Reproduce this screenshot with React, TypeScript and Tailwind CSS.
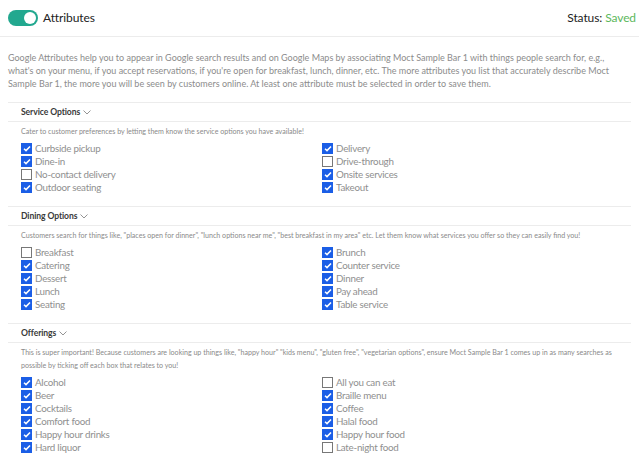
import React from "react";

type Item = { label: string; checked: boolean };

const Check = ({ checked }: { checked: boolean }) =>
  checked ? (
    <span className="w-[11px] h-[11px] bg-[#1b5ee6] flex items-center justify-center shrink-0">
      <svg width="8" height="7" viewBox="0 0 8 7">
        <path d="M1 3.8 L3 5.6 L7 1.4" stroke="white" strokeWidth="1.5" fill="none" />
      </svg>
    </span>
  ) : (
    <span className="w-[11px] h-[11px] border border-[#777] bg-white shrink-0" />
  );

const Row = ({ item }: { item: Item }) => (
  <div className="flex items-center h-[13px] gap-[3px]">
    <Check checked={item.checked} />
    <span className="text-[9.8px] tracking-[-0.25px] leading-[13px] text-[#8f8f8f] whitespace-nowrap">{item.label}</span>
  </div>
);

const Chevron = () => (
  <svg width="8" height="5" viewBox="0 0 8 5" className="ml-[3px] mt-[1px]">
    <path d="M0.5 0.5 L4 4 L7.5 0.5" stroke="#888" strokeWidth="0.9" fill="none" />
  </svg>
);

const Section = ({
  title,
  desc,
  left,
  right,
}: {
  title: string;
  desc: React.ReactNode;
  left: Item[];
  right: Item[];
}) => (
  <div className="mx-2 border-t border-[#ececec]">
    <div className="flex items-center pl-[13px] border-b border-[#ececec] h-[19px]">
      <span className="text-[8.6px] tracking-[-0.1px] font-bold text-[#3a3a3a]">{title}</span>
      <Chevron />
    </div>
    <div className="pl-[13px] pt-[3px] text-[7.1px] leading-[13px] text-[#8a8a8a] whitespace-nowrap">{desc}</div>
    <div className="pl-[13px] pt-[4px] pb-[12px] grid grid-cols-[301px_1fr]">
      <div className="flex flex-col">
        {left.map((i) => (
          <Row key={i.label} item={i} />
        ))}
      </div>
      <div className="flex flex-col">
        {right.map((i) => (
          <Row key={i.label} item={i} />
        ))}
      </div>
    </div>
  </div>
);

export default function App() {
  return (
    <div className="w-[639px] h-[455px] overflow-hidden bg-white font-['Lato',sans-serif]">
      <div className="h-[37px] flex items-center justify-between pl-2 pr-[3px] border-b border-[#ececec]">
        <div className="flex items-center gap-[5px]">
          <div className="w-[30px] h-[16px] rounded-full bg-[#22a88f] flex items-center justify-end pr-[2px]">
            <div className="w-[12px] h-[12px] rounded-full bg-white" />
          </div>
          <span className="text-[12px] tracking-[-0.1px] text-[#222]">Attributes</span>
        </div>
        <div className="text-[12px] tracking-[-0.1px] text-[#222]">
          Status: <span className="text-[#5cb85c]">Saved</span>
        </div>
      </div>
      <div className="px-2 pt-[14px] pb-[12px] text-[9px] leading-[13px] text-[#8c8c8c] whitespace-nowrap">
        Google Attributes help you to appear in Google search results and on Google Maps by associating Moct Sample Bar 1 with things people search for, e.g.,
        <br />
        what's on your menu, if you accept reservations, if you're open for breakfast, lunch, dinner, etc. The more attributes you list that accurately describe Moct
        <br />
        Sample Bar 1, the more you will be seen by customers online. At least one attribute must be selected in order to save them.
      </div>
      <Section
        title="Service Options"
        desc="Cater to customer preferences by letting them know the service options you have available!"
        left={[
          { label: "Curbside pickup", checked: true },
          { label: "Dine-in", checked: true },
          { label: "No-contact delivery", checked: false },
          { label: "Outdoor seating", checked: true },
        ]}
        right={[
          { label: "Delivery", checked: true },
          { label: "Drive-through", checked: false },
          { label: "Onsite services", checked: true },
          { label: "Takeout", checked: true },
        ]}
      />
      <Section
        title="Dining Options"
        desc={
          'Customers search for things like, "places open for dinner", "lunch options near me", "best breakfast in my area" etc. Let them know what services you offer so they can easily find you!'
        }
        left={[
          { label: "Breakfast", checked: false },
          { label: "Catering", checked: true },
          { label: "Dessert", checked: true },
          { label: "Lunch", checked: true },
          { label: "Seating", checked: true },
        ]}
        right={[
          { label: "Brunch", checked: true },
          { label: "Counter service", checked: true },
          { label: "Dinner", checked: true },
          { label: "Pay ahead", checked: true },
          { label: "Table service", checked: true },
        ]}
      />
      <Section
        title="Offerings"
        desc={
          <>
            This is super important! Because customers are looking up things like, "happy hour" "kids menu", "gluten free", "vegetarian options", ensure Moct Sample Bar 1 comes up in as many searches as
            <br />
            possible by ticking off each box that relates to you!
          </>
        }
        left={[
          { label: "Alcohol", checked: true },
          { label: "Beer", checked: true },
          { label: "Cocktails", checked: true },
          { label: "Comfort food", checked: true },
          { label: "Happy hour drinks", checked: true },
          { label: "Hard liquor", checked: true },
        ]}
        right={[
          { label: "All you can eat", checked: false },
          { label: "Braille menu", checked: true },
          { label: "Coffee", checked: true },
          { label: "Halal food", checked: true },
          { label: "Happy hour food", checked: true },
          { label: "Late-night food", checked: false },
        ]}
      />
    </div>
  );
}
